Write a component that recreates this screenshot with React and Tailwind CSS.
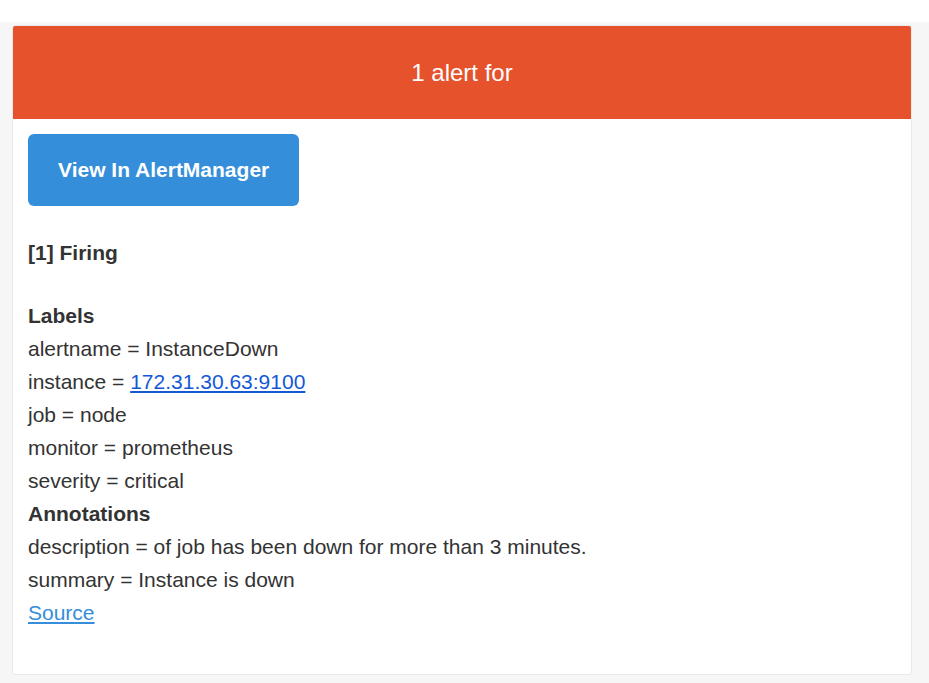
import React from 'react';

const labels = [
    { key: 'alertname', value: 'InstanceDown' },
    { key: 'instance', value: '172.31.30.63:9100', link: true },
    { key: 'job', value: 'node' },
    { key: 'monitor', value: 'prometheus' },
    { key: 'severity', value: 'critical' },
];

const annotations = [
    { key: 'description', value: 'of job has been down for more than 3 minutes.' },
    { key: 'summary', value: 'Instance is down' },
];

const App = () => {
    return (
        <div className="min-h-screen bg-white font-['Liberation_Sans',Arial,sans-serif]">
            <div className="h-[22px]"></div>
            <div className="bg-[#f6f6f6] pt-[3px] pl-[12px] pb-[9px]">
                <div className="w-[900px] bg-white border border-[#e9e9e9] rounded-[3px] overflow-hidden">
                    <div className="h-[93px] bg-[#e6522c] flex items-center justify-center text-white text-[24px]">
                        1 alert for
                    </div>
                    <div className="px-[15px] pt-[15px] pb-[45px] text-[21px] leading-[33px] text-[#333333]">
                        <a
                            href="#"
                            className="inline-block bg-[#348eda] text-white font-bold text-[21px] leading-[32px] px-[30px] py-[20px] rounded-[6px]"
                        >
                            View In AlertManager
                        </a>
                        <div className="mt-[30px] font-bold">[1] Firing</div>
                        <div className="mt-[30px]">
                            <div className="font-bold">Labels</div>
                            {labels.map((l) => (
                                <div key={l.key}>
                                    {l.key} ={' '}
                                    {l.link ? (
                                        <a href="#" className="text-[#1558d6] underline">{l.value}</a>
                                    ) : (
                                        l.value
                                    )}
                                </div>
                            ))}
                            <div className="font-bold">Annotations</div>
                            {annotations.map((a) => (
                                <div key={a.key}>{a.key} = {a.value}</div>
                            ))}
                            <a href="#" className="text-[#348eda] underline">Source</a>
                        </div>
                    </div>
                </div>
            </div>
        </div>
    );
};

export default App;
